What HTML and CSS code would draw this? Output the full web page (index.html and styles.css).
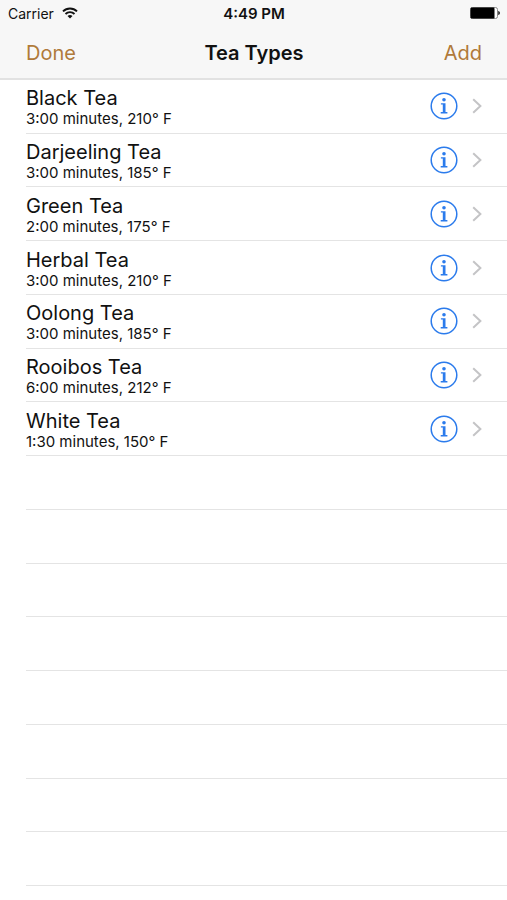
FILE: index.html
```html
<!DOCTYPE html>
<html lang="en">

<head>
    <meta charset="UTF-8">
    <meta name="viewport" content="width=device-width, initial-scale=1.0">
    <title>Tea Types</title>
    <link rel="stylesheet" href="styles.css">
</head>

<body>
    <!-- shared icons -->
    <svg class="sprite" aria-hidden="true">
        <symbol id="info" viewBox="0 0 28 28">
            <circle cx="14" cy="14" r="12.8" fill="none" stroke="currentColor" stroke-width="1.5" />
            <circle cx="14" cy="7.8" r="1.8" fill="currentColor" />
            <path d="M10.9 11.3h4.6v8.8h1.9v1.3h-6.7v-1.3h2.1v-7.5h-1.9z" fill="currentColor" />
        </symbol>
        <symbol id="chevron" viewBox="0 0 10 16">
            <path d="M1.2 1.2L8.4 8l-7.2 6.8" fill="none" stroke="currentColor" stroke-width="2" />
        </symbol>
    </svg>

    <header class="top">
        <div class="status">
            <div class="carrier">
                <span>Carrier</span>
                <svg class="wifi" viewBox="0 0 16 12" aria-hidden="true">
                    <path d="M1 4.4a10 10 0 0 1 14 0M3.5 7a6.4 6.4 0 0 1 9 0" fill="none" stroke="#111" stroke-width="1.9" />
                    <path d="M8 11.6L5.5 9.1a3.6 3.6 0 0 1 5 0z" fill="#111" />
                </svg>
            </div>
            <span class="time">4:49 PM</span>
            <svg class="battery" viewBox="0 0 30 12" aria-hidden="true">
                <rect x="0.5" y="0.5" width="27" height="11" rx="2" fill="#fff" stroke="#888" />
                <rect x="0.5" y="0.5" width="24" height="11" rx="1.2" fill="#000" />
                <path d="M28.3 4c2 .6 2 3.4 0 4z" fill="#000" />
            </svg>
        </div>
        <nav class="navbar">
            <button class="bar-btn" type="button">Done</button>
            <h1 class="title">Tea Types</h1>
            <button class="bar-btn right" type="button">Add</button>
        </nav>
    </header>

    <ul class="list">
        <li class="row">
            <div class="text"><span class="name">Black Tea</span><span class="detail">3:00 minutes, 210° F</span></div>
            <button class="info" type="button" aria-label="Black Tea info"><svg><use href="#info" /></svg></button>
            <svg class="chevron" aria-hidden="true"><use href="#chevron" /></svg>
        </li>
        <li class="row">
            <div class="text"><span class="name">Darjeeling Tea</span><span class="detail">3:00 minutes, 185° F</span></div>
            <button class="info" type="button" aria-label="Darjeeling Tea info"><svg><use href="#info" /></svg></button>
            <svg class="chevron" aria-hidden="true"><use href="#chevron" /></svg>
        </li>
        <li class="row">
            <div class="text"><span class="name">Green Tea</span><span class="detail">2:00 minutes, 175° F</span></div>
            <button class="info" type="button" aria-label="Green Tea info"><svg><use href="#info" /></svg></button>
            <svg class="chevron" aria-hidden="true"><use href="#chevron" /></svg>
        </li>
        <li class="row">
            <div class="text"><span class="name">Herbal Tea</span><span class="detail">3:00 minutes, 210° F</span></div>
            <button class="info" type="button" aria-label="Herbal Tea info"><svg><use href="#info" /></svg></button>
            <svg class="chevron" aria-hidden="true"><use href="#chevron" /></svg>
        </li>
        <li class="row">
            <div class="text"><span class="name">Oolong Tea</span><span class="detail">3:00 minutes, 185° F</span></div>
            <button class="info" type="button" aria-label="Oolong Tea info"><svg><use href="#info" /></svg></button>
            <svg class="chevron" aria-hidden="true"><use href="#chevron" /></svg>
        </li>
        <li class="row">
            <div class="text"><span class="name">Rooibos Tea</span><span class="detail">6:00 minutes, 212° F</span></div>
            <button class="info" type="button" aria-label="Rooibos Tea info"><svg><use href="#info" /></svg></button>
            <svg class="chevron" aria-hidden="true"><use href="#chevron" /></svg>
        </li>
        <li class="row">
            <div class="text"><span class="name">White Tea</span><span class="detail">1:30 minutes, 150° F</span></div>
            <button class="info" type="button" aria-label="White Tea info"><svg><use href="#info" /></svg></button>
            <svg class="chevron" aria-hidden="true"><use href="#chevron" /></svg>
        </li>
        <!-- empty rows -->
        <li class="row"></li>
        <li class="row"></li>
        <li class="row"></li>
        <li class="row"></li>
        <li class="row"></li>
        <li class="row"></li>
        <li class="row"></li>
        <li class="row"></li>
    </ul>
</body>

</html>
```
FILE: styles.css
```css
* {
    margin: 0;
    padding: 0;
    box-sizing: border-box;
}

body {
    min-height: 100vh;
    display: flex;
    flex-direction: column;
    background-color: #fff;
    color: #111;
    font-family: Inter, "Liberation Sans", sans-serif;
}

button {
    border: none;
    background: none;
    font-family: inherit;
    cursor: pointer;
}

.sprite {
    display: none;
}

.top {
    background-color: #f7f7f7;
    border-bottom: 2px solid #e2e2e2;
}

.status {
    display: grid;
    grid-template-columns: 1fr auto 1fr;
    align-items: center;
    height: 26px;
    padding: 0 7px 0 8px;
    font-size: 14px;
}

.carrier {
    display: flex;
    align-items: center;
    gap: 8px;
}

.wifi {
    width: 16px;
    height: 12px;
}

.time {
    font-size: 15px;
    font-weight: 600;
}

.battery {
    justify-self: end;
    width: 30px;
    height: 12px;
}

.navbar {
    display: grid;
    grid-template-columns: 1fr auto 1fr;
    align-items: center;
    height: 52px;
    padding: 2px 25px 0 26px;
}

.bar-btn {
    color: #b07a3a;
    font-size: 20px;
    text-align: left;
}

.bar-btn.right {
    text-align: right;
}

.title {
    font-size: 20px;
    font-weight: 600;
}

.list {
    flex: 1;
    display: grid;
    grid-auto-rows: 1fr;
    padding: 0 0 14px 26px;
    list-style: none;
}

.row {
    display: flex;
    align-items: center;
    min-height: 44px;
    padding-right: 25px;
    border-bottom: 1px solid #e4e4e4;
}

.text {
    flex: 1;
    display: flex;
    flex-direction: column;
    padding-top: 2px;
}

.name {
    font-size: 20px;
    line-height: 24px;
}

.detail {
    font-size: 15px;
    line-height: 18px;
}

.info {
    color: #2b7bec;
}

.info svg {
    display: block;
    width: 28px;
    height: 28px;
}

.chevron {
    width: 10px;
    height: 16px;
    margin-left: 14px;
    color: #c4c4c6;
}
```
